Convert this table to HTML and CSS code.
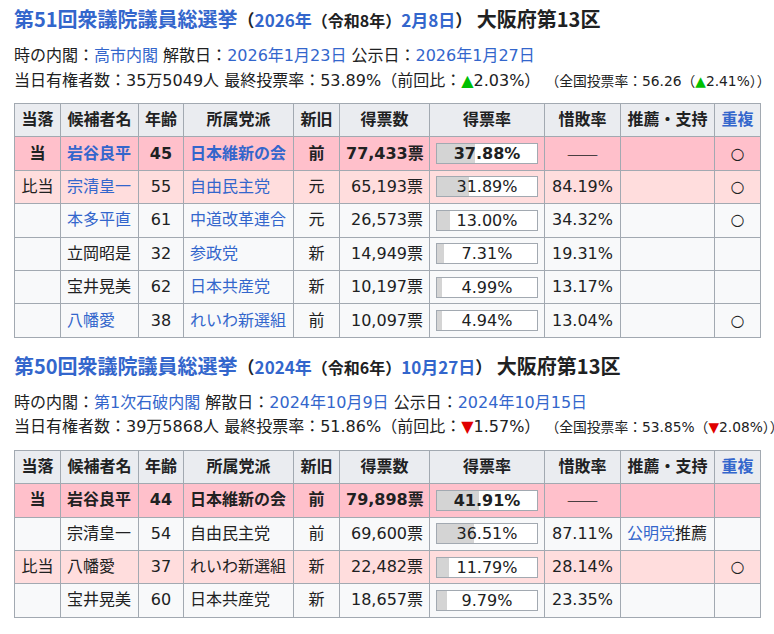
FILE: index.html
```html
<!DOCTYPE html>
<html lang="ja">
<head>
<meta charset="utf-8">
<title>大阪府第13区</title>
<link rel="stylesheet" href="styles.css">
</head>
<body>
<div class="page">
  <section class="election">
    <h2 class="title"><a href="#">第51回衆議院議員総選挙</a><span class="date">（<a href="#">2026年</a><span class="era">（令和8年）</span><a href="#">2月8日</a>）</span> <span class="district">大阪府第13区</span></h2>
    <p class="info">時の内閣：<a href="#">高市内閣</a> 解散日：<a href="#">2026年1月23日</a> 公示日：<a href="#">2026年1月27日</a></p>
    <p class="info">当日有権者数：35万5049人 最終投票率：53.89%（前回比：<span class="up">▲</span>2.03%） <span class="natl">（全国投票率：56.26（<span class="up">▲</span>2.41%））</span></p>
    <table class="results">
      <colgroup>
        <col class="c-res"><col class="c-name"><col class="c-age"><col class="c-party"><col class="c-new"><col class="c-votes"><col class="c-rate"><col class="c-loss"><col class="c-rec"><col class="c-dup">
      </colgroup>
      <thead>
        <tr><th>当落</th><th>候補者名</th><th>年齢</th><th>所属党派</th><th>新旧</th><th>得票数</th><th>得票率</th><th>惜敗率</th><th>推薦・支持</th><th><a href="#">重複</a></th></tr>
      </thead>
      <tbody>
        <tr class="win">
          <td class="ctr">当</td><td><a href="#">岩谷良平</a></td><td class="ctr">45</td><td><a href="#">日本維新の会</a></td><td class="ctr">前</td><td class="num">77,433票</td>
          <td><div class="bar" style="--p:37.88%">37.88%</div></td><td class="ctr dash">――</td><td></td><td class="ctr">○</td>
        </tr>
        <tr class="prwin">
          <td class="ctr">比当</td><td><a href="#">宗清皇一</a></td><td class="ctr">55</td><td><a href="#">自由民主党</a></td><td class="ctr">元</td><td class="num">65,193票</td>
          <td><div class="bar" style="--p:31.89%">31.89%</div></td><td class="ctr">84.19%</td><td></td><td class="ctr">○</td>
        </tr>
        <tr>
          <td></td><td><a href="#">本多平直</a></td><td class="ctr">61</td><td><a href="#">中道改革連合</a></td><td class="ctr">元</td><td class="num">26,573票</td>
          <td><div class="bar" style="--p:13.00%">13.00%</div></td><td class="ctr">34.32%</td><td></td><td class="ctr">○</td>
        </tr>
        <tr>
          <td></td><td>立岡昭是</td><td class="ctr">32</td><td><a href="#">参政党</a></td><td class="ctr">新</td><td class="num">14,949票</td>
          <td><div class="bar" style="--p:7.31%">7.31%</div></td><td class="ctr">19.31%</td><td></td><td></td>
        </tr>
        <tr>
          <td></td><td>宝井晃美</td><td class="ctr">62</td><td><a href="#">日本共産党</a></td><td class="ctr">新</td><td class="num">10,197票</td>
          <td><div class="bar" style="--p:4.99%">4.99%</div></td><td class="ctr">13.17%</td><td></td><td></td>
        </tr>
        <tr>
          <td></td><td><a href="#">八幡愛</a></td><td class="ctr">38</td><td><a href="#">れいわ新選組</a></td><td class="ctr">前</td><td class="num">10,097票</td>
          <td><div class="bar" style="--p:4.94%">4.94%</div></td><td class="ctr">13.04%</td><td></td><td class="ctr">○</td>
        </tr>
      </tbody>
    </table>
  </section>

  <section class="election">
    <h2 class="title"><a href="#">第50回衆議院議員総選挙</a><span class="date">（<a href="#">2024年</a><span class="era">（令和6年）</span><a href="#">10月27日</a>）</span> <span class="district">大阪府第13区</span></h2>
    <p class="info">時の内閣：<a href="#">第1次石破内閣</a> 解散日：<a href="#">2024年10月9日</a> 公示日：<a href="#">2024年10月15日</a></p>
    <p class="info">当日有権者数：39万5868人 最終投票率：51.86%（前回比：<span class="down">▼</span>1.57%） <span class="natl">（全国投票率：53.85%（<span class="down">▼</span>2.08%））</span></p>
    <table class="results">
      <colgroup>
        <col class="c-res"><col class="c-name"><col class="c-age"><col class="c-party"><col class="c-new"><col class="c-votes"><col class="c-rate"><col class="c-loss"><col class="c-rec"><col class="c-dup">
      </colgroup>
      <thead>
        <tr><th>当落</th><th>候補者名</th><th>年齢</th><th>所属党派</th><th>新旧</th><th>得票数</th><th>得票率</th><th>惜敗率</th><th>推薦・支持</th><th><a href="#">重複</a></th></tr>
      </thead>
      <tbody>
        <tr class="win">
          <td class="ctr">当</td><td>岩谷良平</td><td class="ctr">44</td><td>日本維新の会</td><td class="ctr">前</td><td class="num">79,898票</td>
          <td><div class="bar" style="--p:41.91%">41.91%</div></td><td class="ctr dash">――</td><td></td><td></td>
        </tr>
        <tr>
          <td></td><td>宗清皇一</td><td class="ctr">54</td><td>自由民主党</td><td class="ctr">前</td><td class="num">69,600票</td>
          <td><div class="bar" style="--p:36.51%">36.51%</div></td><td class="ctr">87.11%</td><td><a href="#">公明党</a>推薦</td><td></td>
        </tr>
        <tr class="prwin">
          <td class="ctr">比当</td><td>八幡愛</td><td class="ctr">37</td><td>れいわ新選組</td><td class="ctr">新</td><td class="num">22,482票</td>
          <td><div class="bar" style="--p:11.79%">11.79%</div></td><td class="ctr">28.14%</td><td></td><td class="ctr">○</td>
        </tr>
        <tr>
          <td></td><td>宝井晃美</td><td class="ctr">60</td><td>日本共産党</td><td class="ctr">新</td><td class="num">18,657票</td>
          <td><div class="bar" style="--p:9.79%">9.79%</div></td><td class="ctr">23.35%</td><td></td><td></td>
        </tr>
      </tbody>
    </table>
  </section>
</div>
</body>
</html>
```

FILE: styles.css
```css
html {
  overflow: hidden;
}

body {
  margin: 0;
  background: #ffffff;
  color: #202122;
  font-family: "DejaVu Sans", "Noto Sans CJK JP", sans-serif;
  font-size: 16px;
}

a {
  color: #3366cc;
  text-decoration: none;
}

.page {
  padding: 7px 0 0 14px;
}

.election + .election {
  margin-top: 16px;
}

.title {
  margin: 0;
  font-family: "Noto Sans CJK JP", sans-serif;
  font-size: 20px;
  line-height: 24px;
  font-weight: bold;
  white-space: nowrap;
}

.title .date {
  font-size: 17px;
}

.title .era {
  font-size: 16px;
}

.title .district {
  font-size: 20px;
  margin-left: 0;
}

.info {
  margin: 0;
  line-height: 24.5px;
  white-space: nowrap;
}

.title + .info {
  margin-top: 12px;
}

.natl {
  font-size: 13.8px;
}

.up {
  color: #00c000;
}

.down {
  color: #e00000;
}

.results {
  margin-top: 10px;
  border-collapse: collapse;
  table-layout: fixed;
  width: 746px;
  background: #f8f9fa;
}

.c-res { width: 46px; }
.c-name { width: 78px; }
.c-age { width: 45px; }
.c-party { width: 110px; }
.c-new { width: 46px; }
.c-votes { width: 90px; }
.c-rate { width: 115px; }
.c-loss { width: 76px; }
.c-rec { width: 94px; }
.c-dup { width: 46px; }

.results th,
.results td {
  border: 1px solid #a2a9b1;
  height: 32.4px;
  padding: 0 6px;
  line-height: 20px;
  white-space: nowrap;
  overflow: hidden;
}

.results th {
  background: #eaecf0;
  font-weight: bold;
  text-align: center;
}

.results td.ctr {
  text-align: center;
}

.results td.num {
  text-align: right;
}

.results td.dash {
  font-weight: normal;
  font-family: "Noto Sans CJK JP", sans-serif;
}

.results tr.win td {
  background: #ffc0cb;
  font-weight: bold;
}

.results tr.win td.dash {
  font-weight: normal;
}

.results tr.prwin td {
  background: #ffdddd;
}

.bar {
  border: 1px solid #a2a9b1;
  height: 19px;
  line-height: 19px;
  text-align: center;
  background: linear-gradient(to right, #d4d4d4 var(--p), #ffffff var(--p));
}
```
